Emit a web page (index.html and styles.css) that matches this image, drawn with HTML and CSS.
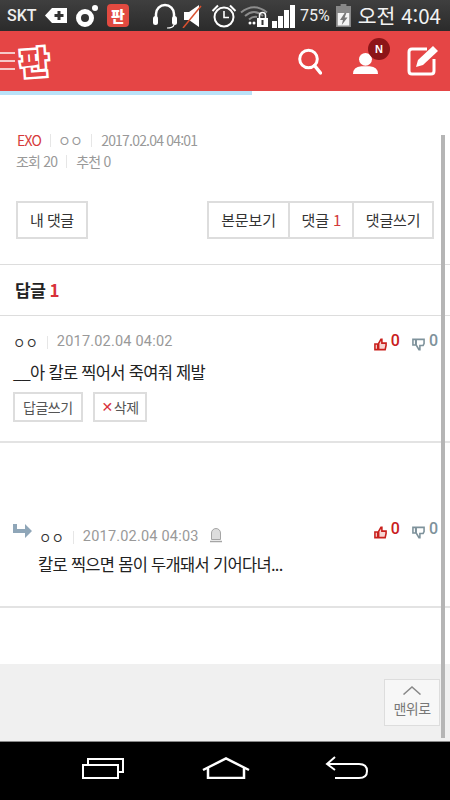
FILE: index.html
```
<!DOCTYPE html>
<html lang="ko">
<head>
<meta charset="utf-8">
<title>판</title>
<link rel="stylesheet" href="styles.css">
</head>
<body>
<div class="screen">
  <div class="status">
    <div class="status-left">
      <span class="carrier">SKT</span>
      <svg class="ico" width="23" height="17" viewBox="0 0 23 17"><path d="M7 1H22V16H7L0 8.5Z" fill="#fff"/><path d="M12.5 7H9.500V10H12.500V13H15.500V10H18.500V7H15.500V4H12.500Z" fill="#333"/></svg>
      <svg class="ico" width="22" height="24" viewBox="0 0 22 24"><circle cx="9" cy="14" r="6.500" fill="none" stroke="#fff" stroke-width="5"/><circle cx="19" cy="4" r="3" fill="#fff"/></svg>
      <span class="app-badge"><span class="app-badge-text">판</span></span>
    </div>
    <div class="status-right">
      <svg class="headset" width="26" height="26" viewBox="0 0 26 26"><path d="M4 15V11a9 9 0 0 1 18 0V15" fill="none" stroke="#fff" stroke-width="2.500"/><rect x="1" y="13" width="5" height="9" rx="2.500" fill="#fff"/><rect x="20" y="13" width="5" height="9" rx="2.500" fill="#fff"/><path d="M22 22Q21 25 15 25" fill="none" stroke="#fff" stroke-width="1.200"/></svg>
      <svg class="mute" width="20" height="24" viewBox="0 0 20 24"><path d="M2 8H7L17 1V23L7 16H2Z" fill="#fff"/><path d="M1 24L19 2" stroke="#d9512f" stroke-width="1.500"/></svg>
      <svg class="alarm" width="26" height="26" viewBox="0 0 26 26"><circle cx="13" cy="14" r="9.500" fill="none" stroke="#fff" stroke-width="2"/><path d="M13 8V14.500H18" fill="none" stroke="#fff" stroke-width="1.600"/><path d="M1.500 8L7 2.500M24.500 8L19 2.500" stroke="#fff" stroke-width="2"/></svg>
      <svg class="wifi" width="28" height="22" viewBox="0 0 28 22"><path d="M1 7.500Q14 -3 27 7.500M5 11Q14 3 23 11M9 14.500Q13 11 17 12" fill="none" stroke="#8d8d8d" stroke-width="2"/><circle cx="10" cy="18" r="1.500" fill="#fff"/><circle cx="14" cy="18" r="1.500" fill="#fff"/><rect x="17" y="13" width="11" height="9" fill="#fff"/><path d="M19.500 13V10.500a3 3 0 0 1 6 0V13" fill="none" stroke="#fff" stroke-width="1.500"/><rect x="21.500" y="15" width="2" height="5" fill="#333"/></svg>
      <div class="signal"><i class="b1"></i><i class="b2"></i><i class="b3"></i><i class="b4"></i></div>
      <span class="pct">75%</span>
      <svg class="batt" width="15" height="23" viewBox="0 0 13 23" preserveAspectRatio="none"><path d="M4 0H9V2H13V23H0V2H4Z" fill="#888"/><path d="M1.500 9H11.500V21.500H1.500Z" fill="#f4f4f4"/><path d="M7.500 9L3.500 16H6L5 21L10 13.500H7.500L9 9Z" fill="#777"/></svg>
      <span class="clock">오전 4:04</span>
    </div>
  </div>

  <header class="topbar">
    <div class="brand">
      <div class="burger"><i></i><i></i><i></i></div>
      <span class="logo">판</span>
    </div>
    <div class="actions">
      <svg width="24" height="27" viewBox="0 0 24 27"><circle cx="10.500" cy="11" r="8.800" fill="none" stroke="#fff" stroke-width="3"/><path d="M16.500 17.500L22.500 25" stroke="#fff" stroke-width="3.500" stroke-linecap="round"/></svg>
      <div class="user">
        <svg width="25" height="22" viewBox="0 0 27 24" preserveAspectRatio="none"><circle cx="13.500" cy="8" r="7" fill="#fff"/><path d="M0 24Q0 16 9 15.500H18Q27 16 27 24Z" fill="#fff"/></svg>
        <span class="new-badge">N</span>
      </div>
      <svg width="31" height="30" viewBox="0 0 31 30"><path d="M20 3H5Q2 3 2 6V25Q2 28 5 28H24Q27 28 27 25V13" fill="none" stroke="#fff" stroke-width="3"/><path d="M26 0L31 5L16 19L9 21L11 14Z" fill="#fff"/></svg>
    </div>
  </header>
  <div class="progress"></div>

  <main class="content">
    <section class="meta">
      <div class="meta-line"><span class="cat">EXO</span><span class="sep"></span><span class="meta-nick">ㅇㅇ</span><span class="sep"></span><span>2017.02.04 04:01</span></div>
      <div class="meta-line"><span>조회 20</span><span class="sep"></span><span>추천 0</span></div>
    </section>

    <div class="btn-row">
      <span class="btn">내 댓글</span>
      <div class="btn-group">
        <span class="btn view-btn">본문보기</span>
        <span class="btn count-btn">댓글 <em>1</em></span>
        <span class="btn write-btn">댓글쓰기</span>
      </div>
    </div>

    <h2 class="replies-title">답글 <em>1</em></h2>

    <article class="reply first">
      <div class="reply-head">
        <span class="nick">ㅇㅇ</span><span class="sep"></span><span class="date">2017.02.04 04:02</span>
        <div class="votes">
          <svg width="13" height="13" viewBox="0 0 14 14"><path d="M1 6.500H4V12.500H1ZM4.500 6.500L7.500 1.500H8.500V5.500H13V8L12 12.500H5V6.500Z" fill="#f7d5d2" stroke="#c9201c" stroke-width="1.700"/></svg>
          <span class="up">0</span>
          <svg class="down-ico" width="13" height="13" viewBox="0 0 14 14"><path d="M1 1.500H4V7.500H1ZM4.500 1.500H13V6L12 8H8.500V12.500H7.500L4.500 7.500Z" fill="#fff" stroke="#7e929b" stroke-width="1.700"/></svg>
          <span class="down">0</span>
        </div>
      </div>
      <p class="reply-text">__아 칼로 찍어서 죽여줘 제발</p>
      <div class="reply-actions">
        <span class="small-btn">답글쓰기</span>
        <span class="small-btn del"><b class="x">✕</b>삭제</span>
      </div>
    </article>

    <article class="reply second">
      <div class="reply-head">
        <svg class="arrow" width="19" height="16" viewBox="0 0 19 16"><path d="M0 0H4V5H12V0L19 7L12 14V9H0Z" fill="#8fa6b8"/></svg>
        <span class="nick">ㅇㅇ</span><span class="sep"></span><span class="date">2017.02.04 04:03</span>
        <svg class="siren" width="14" height="16" viewBox="0 0 14 16"><path d="M2.500 12.500V6a4.500 4.500 0 0 1 9 0V12.500Z" fill="#ddd" stroke="#a5a5a5"/><path d="M1 14.500H13" stroke="#a5a5a5" stroke-width="1.500"/></svg>
        <div class="votes">
          <svg width="13" height="13" viewBox="0 0 14 14"><path d="M1 6.500H4V12.500H1ZM4.500 6.500L7.500 1.500H8.500V5.500H13V8L12 12.500H5V6.500Z" fill="#f7d5d2" stroke="#c9201c" stroke-width="1.700"/></svg>
          <span class="up">0</span>
          <svg class="down-ico" width="13" height="13" viewBox="0 0 14 14"><path d="M1 1.500H4V7.500H1ZM4.500 1.500H13V6L12 8H8.500V12.500H7.500L4.500 7.500Z" fill="#fff" stroke="#7e929b" stroke-width="1.700"/></svg>
          <span class="down">0</span>
        </div>
      </div>
      <p class="reply-text">칼로 찍으면 몸이 두개돼서 기어다녀...</p>
    </article>

    <div class="spacer"></div>

    <footer class="foot">
      <div class="to-top">
        <svg width="18" height="9" viewBox="0 0 18 9"><path d="M0.500 8.500L9 1L17.500 8.500" fill="none" stroke="#888" stroke-width="1.500"/></svg>
        <span>맨위로</span>
      </div>
    </footer>
    <div class="scrollbar"></div>
  </main>

  <nav class="softkeys">
    <svg width="44" height="22" viewBox="0 0 44 22"><rect x="1" y="8" width="35" height="13" fill="none" stroke="#fff" stroke-width="2"/><path d="M6 7V2H41V15H37" fill="none" stroke="#fff" stroke-width="2"/></svg>
    <svg width="48" height="22" viewBox="0 0 48 22"><path d="M1 13L24 1.500L47 13M6 11V21H42V11" fill="none" stroke="#fff" stroke-width="2.500"/></svg>
    <svg width="44" height="24" viewBox="0 0 44 24"><path d="M2 8H34Q42 8 42 15Q42 22 34 22H10M10 1L2 8L10 14" fill="none" stroke="#fff" stroke-width="2"/></svg>
  </nav>
</div>
</body>
</html>
```
FILE: styles.css
```
* { box-sizing: border-box; }
html, body { margin: 0; padding: 0; }
body { font-family: "Noto Sans CJK KR", "Noto Sans", sans-serif; background: #fff; }
.screen { width: 450px; height: 800px; display: flex; flex-direction: column; overflow: hidden; }

.status { height: 31px; flex: none; background: linear-gradient(#3f3f3f, #2b2b2b); display: flex; justify-content: space-between; align-items: center; padding: 0 9px 0 7px; color: #fff; }
.status-left { display: flex; align-items: center; }
.carrier { font: 500 16px "Roboto", sans-serif; color: #eee; width: 38px; }
.ico { display: block; margin-right: 8px; }
.ico + .ico { margin-right: 9px; }
.app-badge { width: 22px; height: 23px; border-radius: 4px; background: #e24a40; display: flex; align-items: center; justify-content: center; }
.app-badge-text { font-size: 15px; font-weight: 900; line-height: 1; color: #fff; }
.status-right { display: flex; align-items: center; }
.status-right svg { display: block; }
.headset { margin-right: 4px; }
.mute { margin-right: 9px; }
.alarm { margin-right: 3px; }
.wifi { margin-right: 4px; }
.signal { display: flex; align-items: flex-end; gap: 1px; height: 24px; margin-right: 5px; }
.signal i { width: 5px; background: #fff; display: block; }
.signal .b1 { height: 7px; }
.signal .b2 { height: 12px; }
.signal .b3 { height: 18px; }
.signal .b4 { height: 23px; }
.pct { font: 16px "Roboto", sans-serif; margin-right: 6px; color: #eee; }
.batt { margin-right: 7px; }
.clock { font-size: 20.500px; line-height: 1; color: #f2f2f2; white-space: nowrap; }

.topbar { height: 60px; flex: none; background: #e54545; display: flex; justify-content: space-between; align-items: center; padding-right: 12px; }
.brand { display: flex; align-items: center; }
.burger { width: 15px; display: flex; flex-direction: column; gap: 6px; }
.burger i { height: 2px; background: #f6c9c9; display: block; }
.logo { font-size: 31px; font-weight: 900; line-height: 40px; color: #e54545; margin-left: 5px; transform: rotate(-4deg); -webkit-text-stroke: 5px #fff; paint-order: stroke fill; }
.actions { display: flex; align-items: center; gap: 30px; }
.actions svg { display: block; }
.user { position: relative; margin: 3px -1px 0 1px; }
.new-badge { position: absolute; top: -14px; right: -12px; width: 22px; height: 22px; border-radius: 50%; background: #8d1518; color: #fff; font: bold 11px/22px "Liberation Sans", sans-serif; text-align: center; }

.progress { height: 4px; width: 252px; flex: none; background: #b9e2f8; }

.content { flex: 1; position: relative; display: flex; flex-direction: column; min-height: 0; }
.meta { padding: 35px 16px 0 17px; font-size: 14px; letter-spacing: -0.8px; color: #999; }
.meta-line { display: flex; align-items: center; line-height: 20px; height: 20px; }
.meta-line + .meta-line { margin: 1px 0 0 -1px; }
.meta-nick { margin-left: -2px; }
.cat { color: #d63a3a; }
.sep { width: 1px; height: 13px; background: #e6e6e6; margin: 0 9px; }

.btn-row { display: flex; justify-content: space-between; padding: 0 16px; margin-top: 30px; }
.btn-group { display: flex; }
.btn-group .btn + .btn { margin-left: -2px; }
.btn { height: 38px; padding: 0 12px; border: 2px solid #ddd; background: #fff; font-size: 15px; line-height: 33px; color: #333; letter-spacing: -0.1px; white-space: nowrap; }
.btn-row > .btn { letter-spacing: -0.5px; }
.btn-group .view-btn { padding: 0 12.500px; }
.btn-group .count-btn { padding: 0 11px; }
.btn-group .write-btn { padding: 0 11.500px; }
.btn em { font-style: normal; color: #d23a3a; }

.replies-title { margin: 25px 0 0; height: 52px; border-top: 1px solid #ddd; border-bottom: 1px solid #ddd; padding: 0 15px; font-size: 17px; font-weight: 700; line-height: 50px; color: #222; letter-spacing: -0.5px; }
.replies-title em { font-style: normal; color: #d8313a; }

.reply { border-bottom: 2px solid #e3e3e3; position: relative; }
.first { height: 127px; padding: 14px 13px 0; }
.second { height: 102px; margin-top: 63px; padding: 19px 13px 0 13px; }
.reply-head { display: flex; align-items: center; height: 24px; }
.nick { font-size: 13.500px; color: #333; line-height: 24px; }
.date { font: 14.500px/24px "Roboto", sans-serif; color: #999; letter-spacing: 0.2px; }
.reply .sep { margin: 0 9px; }
.votes { margin: 2px -1px 0 auto; display: flex; align-items: flex-start; height: 18px; font: 500 16px/14px "Roboto", sans-serif; }
.second .votes { margin-bottom: 14px; }
.votes svg { display: block; margin-top: 4px; }
.up { color: #c9201c; margin-left: 4px; }
.down { color: #7e929b; margin-left: 4px; }
.votes .down-ico { margin-left: 12px; }
.reply-text { margin: 6px 0 0; font-size: 16.500px; line-height: 24px; color: #222; letter-spacing: -0.7px; }
.second .reply-text { margin-left: 25px; margin-top: 3px; }
.arrow { margin: 0 7px 10px 0; }
.siren { margin: -4px 0 0 10px; }
.reply-actions { display: flex; gap: 10px; margin-top: 8px; }
.small-btn { height: 30px; padding: 0 8px; border: 2px solid #ddd; font-size: 14px; line-height: 25px; color: #555; letter-spacing: -0.5px; display: flex; align-items: center; }
.del { padding: 0 6px 0 7px; }
.x { color: #d8313a; font: bold 14px "DejaVu Sans", sans-serif; margin-right: 1px; }

.spacer { flex: 1; }
.foot { height: 78px; flex: none; background: #f0f0f0; border-bottom: 1px solid #888; padding: 15px 10px 0 0; display: flex; justify-content: flex-end; }
.to-top { width: 56px; height: 47px; background: #f7f7f7; border: 1px solid #ddd; display: flex; flex-direction: column; align-items: center; padding-top: 6px; font-size: 14px; line-height: 18px; color: #777; letter-spacing: -0.5px; }
.to-top svg { display: block; margin-bottom: 4px; }
.scrollbar { position: absolute; right: 5px; top: 40px; bottom: 4px; width: 4px; background: #b5b5b5; }

.softkeys { height: 58px; flex: none; background: #000; display: flex; justify-content: space-between; align-items: center; padding: 0 81px 6px 82px; }
.softkeys svg { display: block; }
```
